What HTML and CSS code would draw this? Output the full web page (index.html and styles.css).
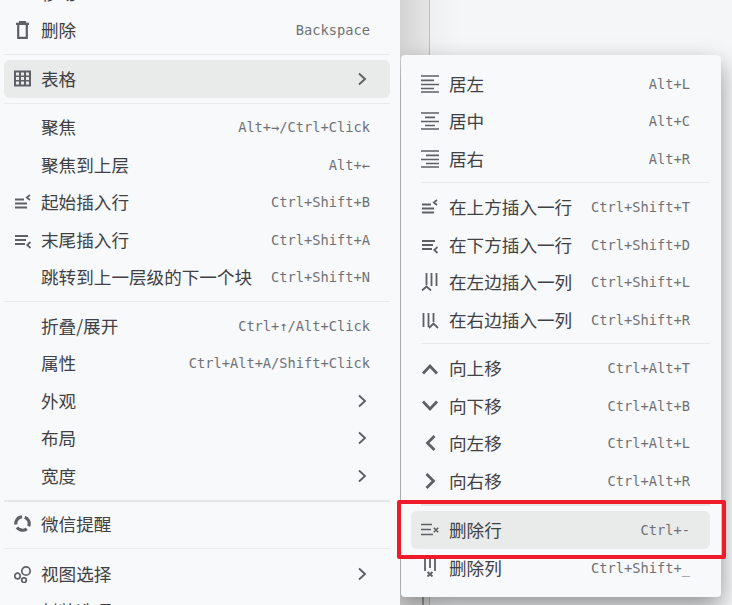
FILE: index.html
```html
<!DOCTYPE html>
<html lang="zh">
<head>
<meta charset="utf-8">
<title>菜单</title>
<link rel="stylesheet" href="styles.css">
</head>
<body>
<svg class="defs" width="0" height="0" aria-hidden="true">
  <defs>
    <symbol id="i-trash" viewBox="0 0 18 18"><path d="M2 2.800h13M6 2.800V1h5v1.800M4.200 3v13.800h8.600V3" fill="none" stroke="currentColor" stroke-width="2.200"/></symbol>
    <symbol id="i-table" viewBox="0 0 18 18"><path fill-rule="evenodd" d="M0 .5h17v16H0zM2 2.500v3h3v-3zM7 2.500v3h3v-3zM12 2.500v3h3v-3zM2 7v3h3V7zM7 7v3h3V7zM12 7v3h3V7zM2 11.500v3h3v-3zM7 11.500v3h3v-3zM12 11.500v3h3v-3z" fill="currentColor"/></symbol>
    <symbol id="i-ins-before" viewBox="0 0 18 18"><path d="M1 6.500h9M1 10.500h12M1 14.500h12" fill="none" stroke="currentColor" stroke-width="1.800"/><path d="M16 2 12.800 4.500 16 7" fill="none" stroke="currentColor" stroke-width="1.700"/></symbol>
    <symbol id="i-ins-after" viewBox="0 0 18 18"><path d="M1 5h13M1 9h11M1 13h10" fill="none" stroke="currentColor" stroke-width="1.800"/><path d="M16.500 11 13.200 14l3.300 3" fill="none" stroke="currentColor" stroke-width="1.700"/></symbol>
    <symbol id="i-ins-left" viewBox="0 0 18 18"><path d="M5.500 0v12M10.500 0v13M15.500 0v13" fill="none" stroke="currentColor" stroke-width="1.800"/><path d="M1 17.500l4.500-4 4.500 4" fill="none" stroke="currentColor" stroke-width="1.800"/></symbol>
    <symbol id="i-ins-right" viewBox="0 0 18 18"><path d="M2.500 2v14M7.500 2v14M12.500 2v9" fill="none" stroke="currentColor" stroke-width="1.800"/><path d="M8 17l4.500-4.500L17 17" fill="none" stroke="currentColor" stroke-width="1.800"/></symbol>
    <symbol id="i-left" viewBox="0 0 18 18"><path d="M0 1h18M0 5.300h13M0 9.500h18M0 13.500h13M0 17h18" fill="none" stroke="currentColor" stroke-width="1.700"/></symbol>
    <symbol id="i-center" viewBox="0 0 18 18"><path d="M0 1h18M4 5.300h10M0 9.500h18M4 13.500h10M0 17h18" fill="none" stroke="currentColor" stroke-width="1.700"/></symbol>
    <symbol id="i-right" viewBox="0 0 18 18"><path d="M0 1h18M5 5.300h13M0 9.500h18M5 13.500h13M0 17h18" fill="none" stroke="currentColor" stroke-width="1.700"/></symbol>
    <symbol id="i-up" viewBox="0 0 18 18"><path d="M2 14.500 9 7l7 7.500" fill="none" stroke="currentColor" stroke-width="2.800"/></symbol>
    <symbol id="i-down" viewBox="0 0 18 18"><path d="M2 4.500 9 12l7-7.500" fill="none" stroke="currentColor" stroke-width="2.800"/></symbol>
    <symbol id="i-back" viewBox="0 0 18 18"><path d="M13.500 2 6.500 9l7 7" fill="none" stroke="currentColor" stroke-width="2.800"/></symbol>
    <symbol id="i-fwd" viewBox="0 0 18 18"><path d="M5.500 2l7 7-7 7" fill="none" stroke="currentColor" stroke-width="2.800"/></symbol>
    <symbol id="i-del-row" viewBox="0 0 18 18"><path d="M0 3.500h11M0 8.500h10M0 13.500h12" fill="none" stroke="currentColor" stroke-width="1.700"/><path d="M12.800 6.800l4.400 4.400M17.200 6.800l-4.400 4.400" fill="none" stroke="currentColor" stroke-width="1.600"/></symbol>
    <symbol id="i-del-col" viewBox="0 0 18 18"><path d="M4 0v12M9 0v9M14 0v12" fill="none" stroke="currentColor" stroke-width="1.800"/><path d="M6.500 13l5 4.500M11.500 13l-5 4.500" fill="none" stroke="currentColor" stroke-width="1.900"/></symbol>
    <symbol id="i-wechat" viewBox="0 0 18 18"><circle cx="8.500" cy="8.500" r="6.700" fill="none" stroke="currentColor" stroke-width="3.200" stroke-dasharray="11 3" transform="rotate(-70 8.500 8.500)"/></symbol>
    <symbol id="i-view" viewBox="0 0 18 18"><circle cx="12" cy="6" r="4.200" fill="none" stroke="currentColor" stroke-width="1.700"/><circle cx="3.500" cy="11" r="2.800" fill="none" stroke="currentColor" stroke-width="1.700"/><circle cx="10" cy="15.200" r="2.300" fill="none" stroke="currentColor" stroke-width="1.700"/></symbol>
    <symbol id="i-chev" viewBox="0 0 10 14"><path d="M2 1.500 8 7l-6 5.500" fill="none" stroke="currentColor" stroke-width="1.900"/></symbol>
  </defs>
</svg>

<div class="backdrop"></div>

<nav class="menu sub">
  <div class="row"><svg class="ico"><use href="#i-left"/></svg><span class="label">居左</span><span class="key">Alt+L</span></div>
  <div class="row"><svg class="ico"><use href="#i-center"/></svg><span class="label">居中</span><span class="key">Alt+C</span></div>
  <div class="row"><svg class="ico"><use href="#i-right"/></svg><span class="label">居右</span><span class="key">Alt+R</span></div>
  <div class="sep"></div>
  <div class="row"><svg class="ico"><use href="#i-ins-before"/></svg><span class="label">在上方插入一行</span><span class="key">Ctrl+Shift+T</span></div>
  <div class="row"><svg class="ico"><use href="#i-ins-after"/></svg><span class="label">在下方插入一行</span><span class="key">Ctrl+Shift+D</span></div>
  <div class="row"><svg class="ico"><use href="#i-ins-left"/></svg><span class="label">在左边插入一列</span><span class="key">Ctrl+Shift+L</span></div>
  <div class="row"><svg class="ico"><use href="#i-ins-right"/></svg><span class="label">在右边插入一列</span><span class="key">Ctrl+Shift+R</span></div>
  <div class="sep"></div>
  <div class="row"><svg class="ico"><use href="#i-up"/></svg><span class="label">向上移</span><span class="key">Ctrl+Alt+T</span></div>
  <div class="row"><svg class="ico"><use href="#i-down"/></svg><span class="label">向下移</span><span class="key">Ctrl+Alt+B</span></div>
  <div class="row"><svg class="ico"><use href="#i-back"/></svg><span class="label">向左移</span><span class="key">Ctrl+Alt+L</span></div>
  <div class="row"><svg class="ico"><use href="#i-fwd"/></svg><span class="label">向右移</span><span class="key">Ctrl+Alt+R</span></div>
  <div class="sep thick"></div>
  <div class="row on"><svg class="ico"><use href="#i-del-row"/></svg><span class="label">删除行</span><span class="key">Ctrl+-</span></div>
  <div class="row"><svg class="ico"><use href="#i-del-col"/></svg><span class="label">删除列</span><span class="key">Ctrl+Shift+_</span></div>
</nav>

<nav class="menu main">
  <div class="row"><span class="ico"></span><span class="label">移动</span></div>
  <div class="row"><svg class="ico"><use href="#i-trash"/></svg><span class="label">删除</span><span class="key">Backspace</span></div>
  <div class="sep"></div>
  <div class="row on"><svg class="ico"><use href="#i-table"/></svg><span class="label">表格</span><svg class="chev"><use href="#i-chev"/></svg></div>
  <div class="sep"></div>
  <div class="row"><span class="ico"></span><span class="label">聚焦</span><span class="key">Alt+→/Ctrl+Click</span></div>
  <div class="row"><span class="ico"></span><span class="label">聚焦到上层</span><span class="key">Alt+←</span></div>
  <div class="row"><svg class="ico"><use href="#i-ins-before"/></svg><span class="label">起始插入行</span><span class="key">Ctrl+Shift+B</span></div>
  <div class="row"><svg class="ico"><use href="#i-ins-after"/></svg><span class="label">末尾插入行</span><span class="key">Ctrl+Shift+A</span></div>
  <div class="row"><span class="ico"></span><span class="label">跳转到上一层级的下一个块</span><span class="key">Ctrl+Shift+N</span></div>
  <div class="sep"></div>
  <div class="row"><span class="ico"></span><span class="label">折叠/展开</span><span class="key">Ctrl+↑/Alt+Click</span></div>
  <div class="row"><span class="ico"></span><span class="label">属性</span><span class="key">Ctrl+Alt+A/Shift+Click</span></div>
  <div class="row"><span class="ico"></span><span class="label">外观</span><svg class="chev"><use href="#i-chev"/></svg></div>
  <div class="row"><span class="ico"></span><span class="label">布局</span><svg class="chev"><use href="#i-chev"/></svg></div>
  <div class="row"><span class="ico"></span><span class="label">宽度</span><svg class="chev"><use href="#i-chev"/></svg></div>
  <div class="sep thick"></div>
  <div class="row"><svg class="ico"><use href="#i-wechat"/></svg><span class="label">微信提醒</span></div>
  <div class="sep wide"></div>
  <div class="row"><svg class="ico"><use href="#i-view"/></svg><span class="label">视图选择</span><svg class="chev"><use href="#i-chev"/></svg></div>
  <div class="row"><span class="ico"></span><span class="label">封装选项</span></div>
</nav>

<div class="mark"></div>
</body>
</html>
```
FILE: styles.css
```css
* { box-sizing: border-box; }
html, body { margin: 0; height: 100%; overflow: hidden; }
body {
  position: relative;
  width: 732px;
  height: 605px;
  background: #f5f6f8;
  font-family: "Noto Sans CJK SC", "Noto Sans", sans-serif;
  color: #3f4145;
}
.defs { position: absolute; }

.backdrop {
  position: absolute;
  inset: 0 0 0 400px;
  background:
    linear-gradient(90deg, #d4d4d4 0, #e6e6e6 29px, #eef0f1 30px, #f5f6f8 60px);
}
.backdrop::before {
  content: "";
  position: absolute;
  left: 22px;
  top: 590px;
  bottom: 0;
  width: 2px;
  background: #999;
}
.backdrop::after {
  content: "";
  position: absolute;
  left: 28.500px;
  top: 0;
  bottom: 0;
  width: 1px;
  background: #bdbdbd;
}

.menu { background: #f8f9fb; }
.main {
  position: absolute;
  z-index: 2;
  left: 0;
  top: -26px;
  width: 400px;
  padding: 0 10px 0 4px;
}
.sub {
  position: absolute;
  z-index: 1;
  left: 401px;
  top: 55px;
  width: 320px;
  height: 542px;
  padding: 9.750px 11px 0 10px;
  border-radius: 4px;
  box-shadow: 0 10px 24px rgba(0, 0, 0, .4);
}

.row {
  display: flex;
  align-items: center;
  height: 37.500px;
  padding: 0 20px 0 10px;
  border-radius: 6px;
  font-size: 17.600px;
  white-space: nowrap;
}
.row.on { background: #e9eaea; }

.ico {
  flex: none;
  width: 18px;
  height: 18px;
  margin-right: 9px;
  color: #5f6064;
}
.sub .ico { margin-right: 10px; }
.label { flex: 1; line-height: 1; }
.key {
  font-family: "DejaVu Sans Mono", monospace;
  font-size: 13.700px;
  color: #6f7175;
}
.chev {
  flex: none;
  width: 10px;
  height: 14px;
  margin-right: 3px;
  color: #5f6064;
}

.sep {
  height: 1px;
  margin: 5px 0;
  background: #e9eaec;
}
.sep.thick { background: #e6e7e9; height: 2px; margin-bottom: 4px; }
.sep.wide { margin-bottom: 6px; }
.sub .sep { margin-left: 10px; }
.sub .sep.thick { margin-bottom: 5px; }

.mark {
  position: absolute;
  z-index: 3;
  left: 397px;
  top: 500px;
  width: 329px;
  height: 59px;
  border: 4px solid #ee1c2b;
  border-radius: 2px;
}
```
